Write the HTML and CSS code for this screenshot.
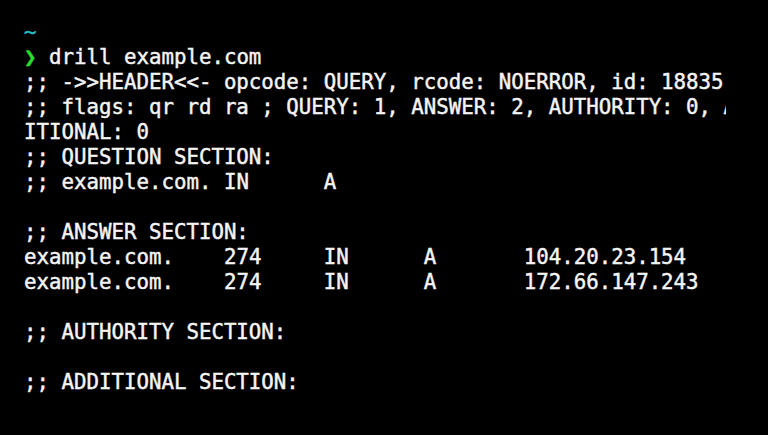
FILE: index.html
```html
<!DOCTYPE html>
<html>
<head>
<meta charset="utf-8">
<link rel="stylesheet" href="styles.css">
</head>
<body>
<div class="term">
<div class="line"><span class="cwd">~</span></div>
<div class="line"><span class="prompt">❯</span> drill example.com</div>
<div class="line">;; -&gt;&gt;HEADER&lt;&lt;- opcode: QUERY, rcode: NOERROR, id: 18835</div>
<div class="line">;; flags: qr rd ra ; QUERY: 1, ANSWER: 2, AUTHORITY: 0, ADD</div>
<div class="line">ITIONAL: 0</div>
<div class="line">;; QUESTION SECTION:</div>
<div class="line">;; example.com.	IN	A</div>
<div class="line"> </div>
<div class="line">;; ANSWER SECTION:</div>
<div class="line">example.com.	274	IN	A	104.20.23.154</div>
<div class="line">example.com.	274	IN	A	172.66.147.243</div>
<div class="line"> </div>
<div class="line">;; AUTHORITY SECTION:</div>
<div class="line"> </div>
<div class="line">;; ADDITIONAL SECTION:</div>
</div>
</body>
</html>
```

FILE: styles.css
```css
html, body {
  margin: 0;
  padding: 0;
  background: #000;
  height: 100%;
  overflow: hidden;
}
.term {
  padding: 20px 0 0 24px;
  font-family: "DejaVu Sans Mono", monospace;
  font-size: 20.75px;
  line-height: 25px;
  color: #f4f4f4;
  tab-size: 8;
  -webkit-text-stroke: 0.45px #f4f4f4;
}
.line {
  white-space: pre;
  width: 702px;
  overflow: hidden;
  height: 25px;
}
.cwd {
  color: #2bb9c6;
  -webkit-text-stroke: 0.45px #2bb9c6;
}
.prompt {
  color: #2ade2c;
  font-weight: bold;
  -webkit-text-stroke: 0.45px #2ade2c;
}
```
